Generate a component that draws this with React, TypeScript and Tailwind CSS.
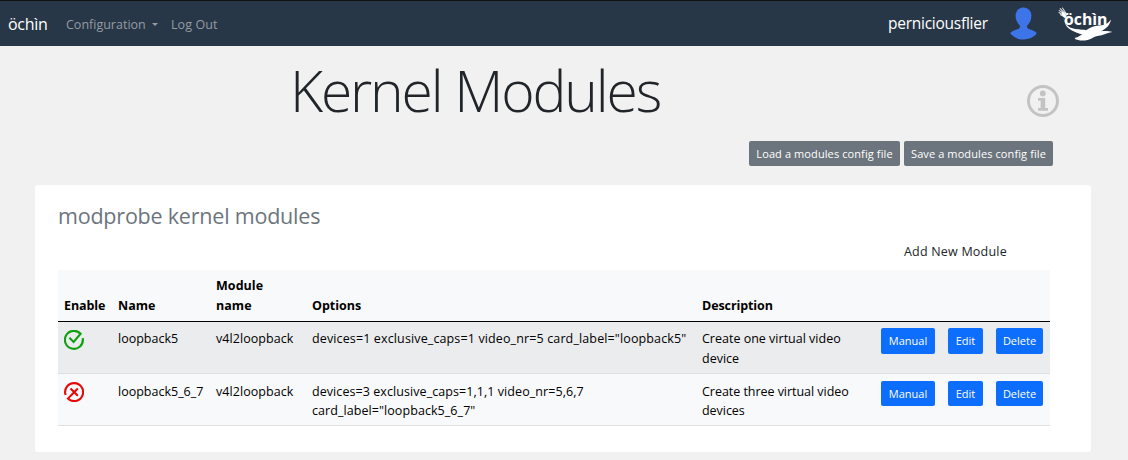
import React from "react";

const modules = [
  {
    enabled: true,
    name: "loopback5",
    module: "v4l2loopback",
    options: ['devices=1 exclusive_caps=1 video_nr=5 card_label="loopback5"'],
    description: ["Create one virtual video", "device"],
  },
  {
    enabled: false,
    name: "loopback5_6_7",
    module: "v4l2loopback",
    options: ["devices=3 exclusive_caps=1,1,1 video_nr=5,6,7", 'card_label="loopback5_6_7"'],
    description: ["Create three virtual video", "devices"],
  },
];

const columns = "grid grid-cols-[54px_98px_96px_390px_179px_67px_48px_60px]";

function EnabledIcon() {
  return (
    <svg width="20" height="20" viewBox="0 0 20 20" fill="none" stroke="#0ea00e" strokeWidth="2.1" strokeLinecap="square">
      <path d="M18.9 9.2A9 9 0 1 1 16.6 3.8L9.6 11.9L6.2 8.6" />
    </svg>
  );
}

function DisabledIcon() {
  return (
    <svg width="20" height="20" viewBox="0 0 20 20" fill="none" stroke="#e80709" strokeWidth="2.1">
      <path d="M1.6 13A9 9 0 1 1 3.9 16.6L13.8 6.4M6.5 6.4L13.8 13.7" />
    </svg>
  );
}

function UserIcon() {
  return (
    <svg width="28" height="34" viewBox="0 0 28 34" fill="#3d74e8">
      <path d="M13.5 .5C8.5 .5 5.4 4.5 5.6 9C5.8 13.2 7.5 16.2 9.6 18.3C10.4 19.3 10 21.4 8.2 22C4.2 23.3 1.1 24.4 .2 26.3C3.5 30.5 8.2 32.5 13.5 32.5C18.8 32.5 23.8 30.5 26.8 26.3C25.9 24.4 22.8 23.3 18.8 22C17 21.4 16.6 19.3 17.4 18.3C19.7 16.1 21.2 13.2 21.4 9C21.6 4.5 18.5 .5 13.5 .5Z" />
    </svg>
  );
}

function Logo() {
  return (
    <svg width="56" height="34" viewBox="0 0 56 34" fill="#fff">
      <g stroke="#fff" strokeWidth="1.1" strokeLinecap="round" opacity=".8">
        <path d="M1.2 3.4L8 9M2.3 1.6L8.4 8M4.5 1L8.5 7M1 5.5L8 10M2.5 7.8L9 11" />
      </g>
      <path d="M3.5 4L7.5 6.5L8 10L6.8 11L4.5 9Z" />
      <path d="M5 9C6.5 13.5 7 17.5 12 20.5C16 22.4 21 22.4 27 23.5L23 27C17 25.5 10 22 7.8 18C6.5 15 5.7 12 5 9Z" />
      <text x="6" y="18.2" className="font-['Open_Sans','Noto_Sans',sans-serif] text-[16.5px] font-bold" textLength="43.5" lengthAdjust="spacingAndGlyphs">öchìn</text>
      <path d="M53 12.6C52 18 48.5 21.7 43 24.3C46 23.7 51 23.9 54.4 25C51 25.4 48 27 43.5 28.2C39.5 29 37 29.2 34 31.2C31 33.2 26 33.8 22 33.4C17.5 32.8 16.2 31.8 17.2 30.8C20.2 29.9 22.4 28.8 24 27.2C20 26.2 15.5 24.6 12.5 21.6C17.2 23.1 24 22.4 28 23.2C32 20.7 35.5 18.8 41 18.4C47 18.5 50.3 16.5 53 12.6Z" />
    </svg>
  );
}

function InfoIcon() {
  return (
    <svg width="34" height="34" viewBox="0 0 34 34" fill="#c3c3c3">
      <circle cx="17" cy="17" r="14.5" fill="none" stroke="#c3c3c3" strokeWidth="3" />
      <circle cx="16.8" cy="9.5" r="2.9" />
      <path d="M12 14H19.2V24H22V26.7H12V24H14.6V16.7H12Z" />
    </svg>
  );
}

function GrayButton({ children, className }: { children: React.ReactNode; className: string }) {
  return (
    <button className={`h-[25px] rounded-[2px] bg-[#6c757d] text-center text-[11px] leading-[25px] tracking-[0.1px] whitespace-nowrap text-white ${className}`}>
      {children}
    </button>
  );
}

function ActionButton({ children, className }: { children: React.ReactNode; className: string }) {
  return (
    <button className={`ml-1.5 rounded-[2px] bg-[#0d6efd] text-center text-[11px] leading-[26px] whitespace-nowrap text-white ${className}`}>
      {children}
    </button>
  );
}

export default function App() {
  return (
    <div className="h-[460px] w-[1128px] overflow-hidden bg-[#f1f1f1] font-['Open_Sans','Noto_Sans',sans-serif] text-black">
      <nav className="flex h-[46px] items-center border-t border-[#111] bg-[#283747] pl-2">
        <span className="w-[58px] pt-px text-[16px] tracking-[-0.3px] text-white">öchìn</span>
        <span className="w-[86px] pt-[3px] text-[12.5px] whitespace-nowrap text-[#949ba3]">Configuration</span>
        <span className="mt-px h-0 w-0 border-x-[3px] border-t-[3px] border-x-transparent border-t-[#949ba3]" />
        <span className="ml-[13px] pt-[3px] text-[12.5px] tracking-[0.1px] whitespace-nowrap text-[#949ba3]">Log Out</span>
        <span className="ml-auto w-[122px] pt-px text-[15.5px] tracking-[-0.25px] whitespace-nowrap text-white">perniciousflier</span>
        <UserIcon />
        <span className="mr-[14px] ml-[20px]"><Logo /></span>
      </nav>

      <header className="flex h-[95px]">
        <h1 className="w-[950px] pt-[9px] text-center text-[57px] leading-[70px] font-light tracking-[-2.15px] text-[#212529]">Kernel Modules</h1>
        <span className="mt-[38px] ml-[76px]"><InfoIcon /></span>
      </header>

      <div className="flex h-[44px] gap-1 pl-[749px]">
        <GrayButton className="w-[151px]">Load a modules config file</GrayButton>
        <GrayButton className="w-[149px]">Save a modules config file</GrayButton>
      </div>

      <main className="ml-[35px] h-[267px] w-[1056px] rounded-[3px] bg-white pl-[23px]">
        <h2 className="h-[57px] pt-4 text-[21.5px] leading-[30px] tracking-[-0.21px] text-[#6c757d]">modprobe kernel modules</h2>
        <div className="h-[28px] pl-[846px] text-[12.5px] leading-[20px] tracking-[0.2px] text-[#212529]">Add New Module</div>
        <div className="w-[992px] text-[12.5px]">
          <div className={`${columns} h-[52px] items-end border-b border-black bg-[#f8f9fa] pb-1.5 leading-[19.5px] font-bold *:pl-1.5`}>
            <span className="tracking-[-0.1px]">Enable</span>
            <span>Name</span>
            <span className="tracking-[0.05px]">Module<br />name</span>
            <span>Options</span>
            <span className="tracking-[-0.1px]">Description</span>
          </div>
          {modules.map((m) => (
            <div
              key={m.name}
              className={`${columns} h-[52px] items-start border-b border-[#dfe0e1] leading-[19.5px] whitespace-nowrap ${m.enabled ? "bg-[#ebeced] pt-1.5" : "bg-[#f8f9fa] pt-[7px]"}`}
            >
              <span className={`pl-1.5 ${m.enabled ? "pt-0.5" : "pt-px"}`}>{m.enabled ? <EnabledIcon /> : <DisabledIcon />}</span>
              <span className={`pl-1.5 ${m.enabled ? "pt-px" : "pt-[0.5px]"}`}>{m.name}</span>
              <span className={`pl-1.5 tracking-[0.06px] ${m.enabled ? "pt-px" : "pt-[0.5px]"}`}>{m.module}</span>
              <span className={`pl-1.5 ${m.enabled ? "pt-px tracking-[0.13px]" : "pt-[0.5px] tracking-[0.07px]"}`}>{m.options.map((line) => <span key={line} className="block">{line}</span>)}</span>
              <span className={`pl-1.5 ${m.enabled ? "pt-px" : "pt-[0.5px] tracking-[-0.04px]"}`}>{m.description.map((line) => <span key={line} className="block">{line}</span>)}</span>
              <ActionButton className={m.enabled ? "h-[26px] w-[54px]" : "h-[25px] w-[54px]"}>Manual</ActionButton>
              <ActionButton className={m.enabled ? "h-[26px] w-[35px]" : "h-[25px] w-[35px]"}>Edit</ActionButton>
              <ActionButton className={m.enabled ? "h-[26px] w-[47px]" : "h-[25px] w-[47px]"}>Delete</ActionButton>
            </div>
          ))}
        </div>
      </main>
    </div>
  );
}
